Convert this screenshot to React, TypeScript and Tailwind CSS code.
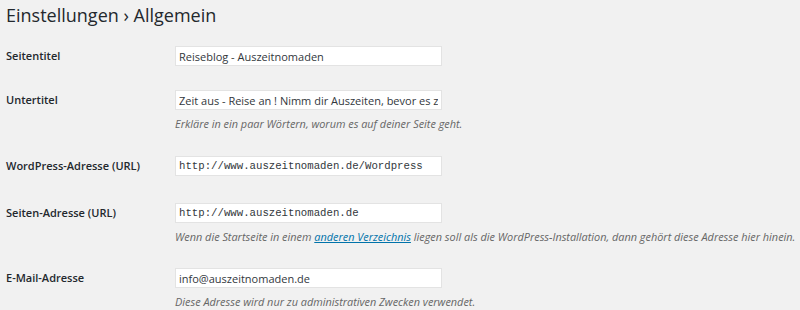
import React from 'react';

type Row = {
  label: string;
  value: string;
  mono?: boolean;
  desc?: React.ReactNode;
  gap: string;
};

const rows: Row[] = [
  { label: 'Seitentitel', value: 'Reiseblog - Auszeitnomaden', gap: 'mt-[16px]' },
  {
    label: 'Untertitel',
    value: 'Zeit aus - Reise an ! Nimm dir Auszeiten, bevor es zu spät ist.',
    desc: 'Erkläre in ein paar Wörtern, worum es auf deiner Seite geht.',
    gap: 'mt-[24px]',
  },
  { label: 'WordPress-Adresse (URL)', value: 'http://www.auszeitnomaden.de/Wordpress', mono: true, gap: 'mt-[22px]' },
  {
    label: 'Seiten-Adresse (URL)',
    value: 'http://www.auszeitnomaden.de',
    mono: true,
    desc: (
      <>
        Wenn die Startseite in einem{' '}
        <a href="#" className="text-[#0073aa] underline">
          anderen Verzeichnis
        </a>{' '}
        liegen soll als die WordPress-Installation, dann gehört diese Adresse hier hinein.
      </>
    ),
    gap: 'mt-[27px]',
  },
  {
    label: 'E-Mail-Adresse',
    value: 'info@auszeitnomaden.de',
    desc: 'Diese Adresse wird nur zu administrativen Zwecken verwendet.',
    gap: 'mt-[21px]',
  },
];

export default function App() {
  return (
    <div className="w-[800px] h-[310px] overflow-hidden bg-[#f1f1f1] pl-[6px] text-[#23282d] font-['Open_Sans',sans-serif]">
      <h1 className="pt-[1px] text-[18px] leading-[29px] font-normal">Einstellungen › Allgemein</h1>

      {rows.map(row => (
        <div key={row.label} className={`flex ${row.gap}`}>
          <label className="w-[169px] shrink-0 text-[11px] leading-[20px] font-semibold">{row.label}</label>
          <div className="flex flex-col">
            <input
              readOnly
              defaultValue={row.value}
              className={`w-[267px] h-[20px] bg-white border border-[#e3e3e3] px-[3px] outline-none text-[#32373c] ${
                row.mono
                  ? "font-['Liberation_Mono',monospace] text-[10.7px]"
                  : "font-['Open_Sans',sans-serif] text-[11px]"
              }`}
            />
            {row.desc && (
              <p className="mt-[4px] text-[10.9px] leading-[20px] italic text-[#666] whitespace-nowrap">{row.desc}</p>
            )}
          </div>
        </div>
      ))}
    </div>
  );
}
